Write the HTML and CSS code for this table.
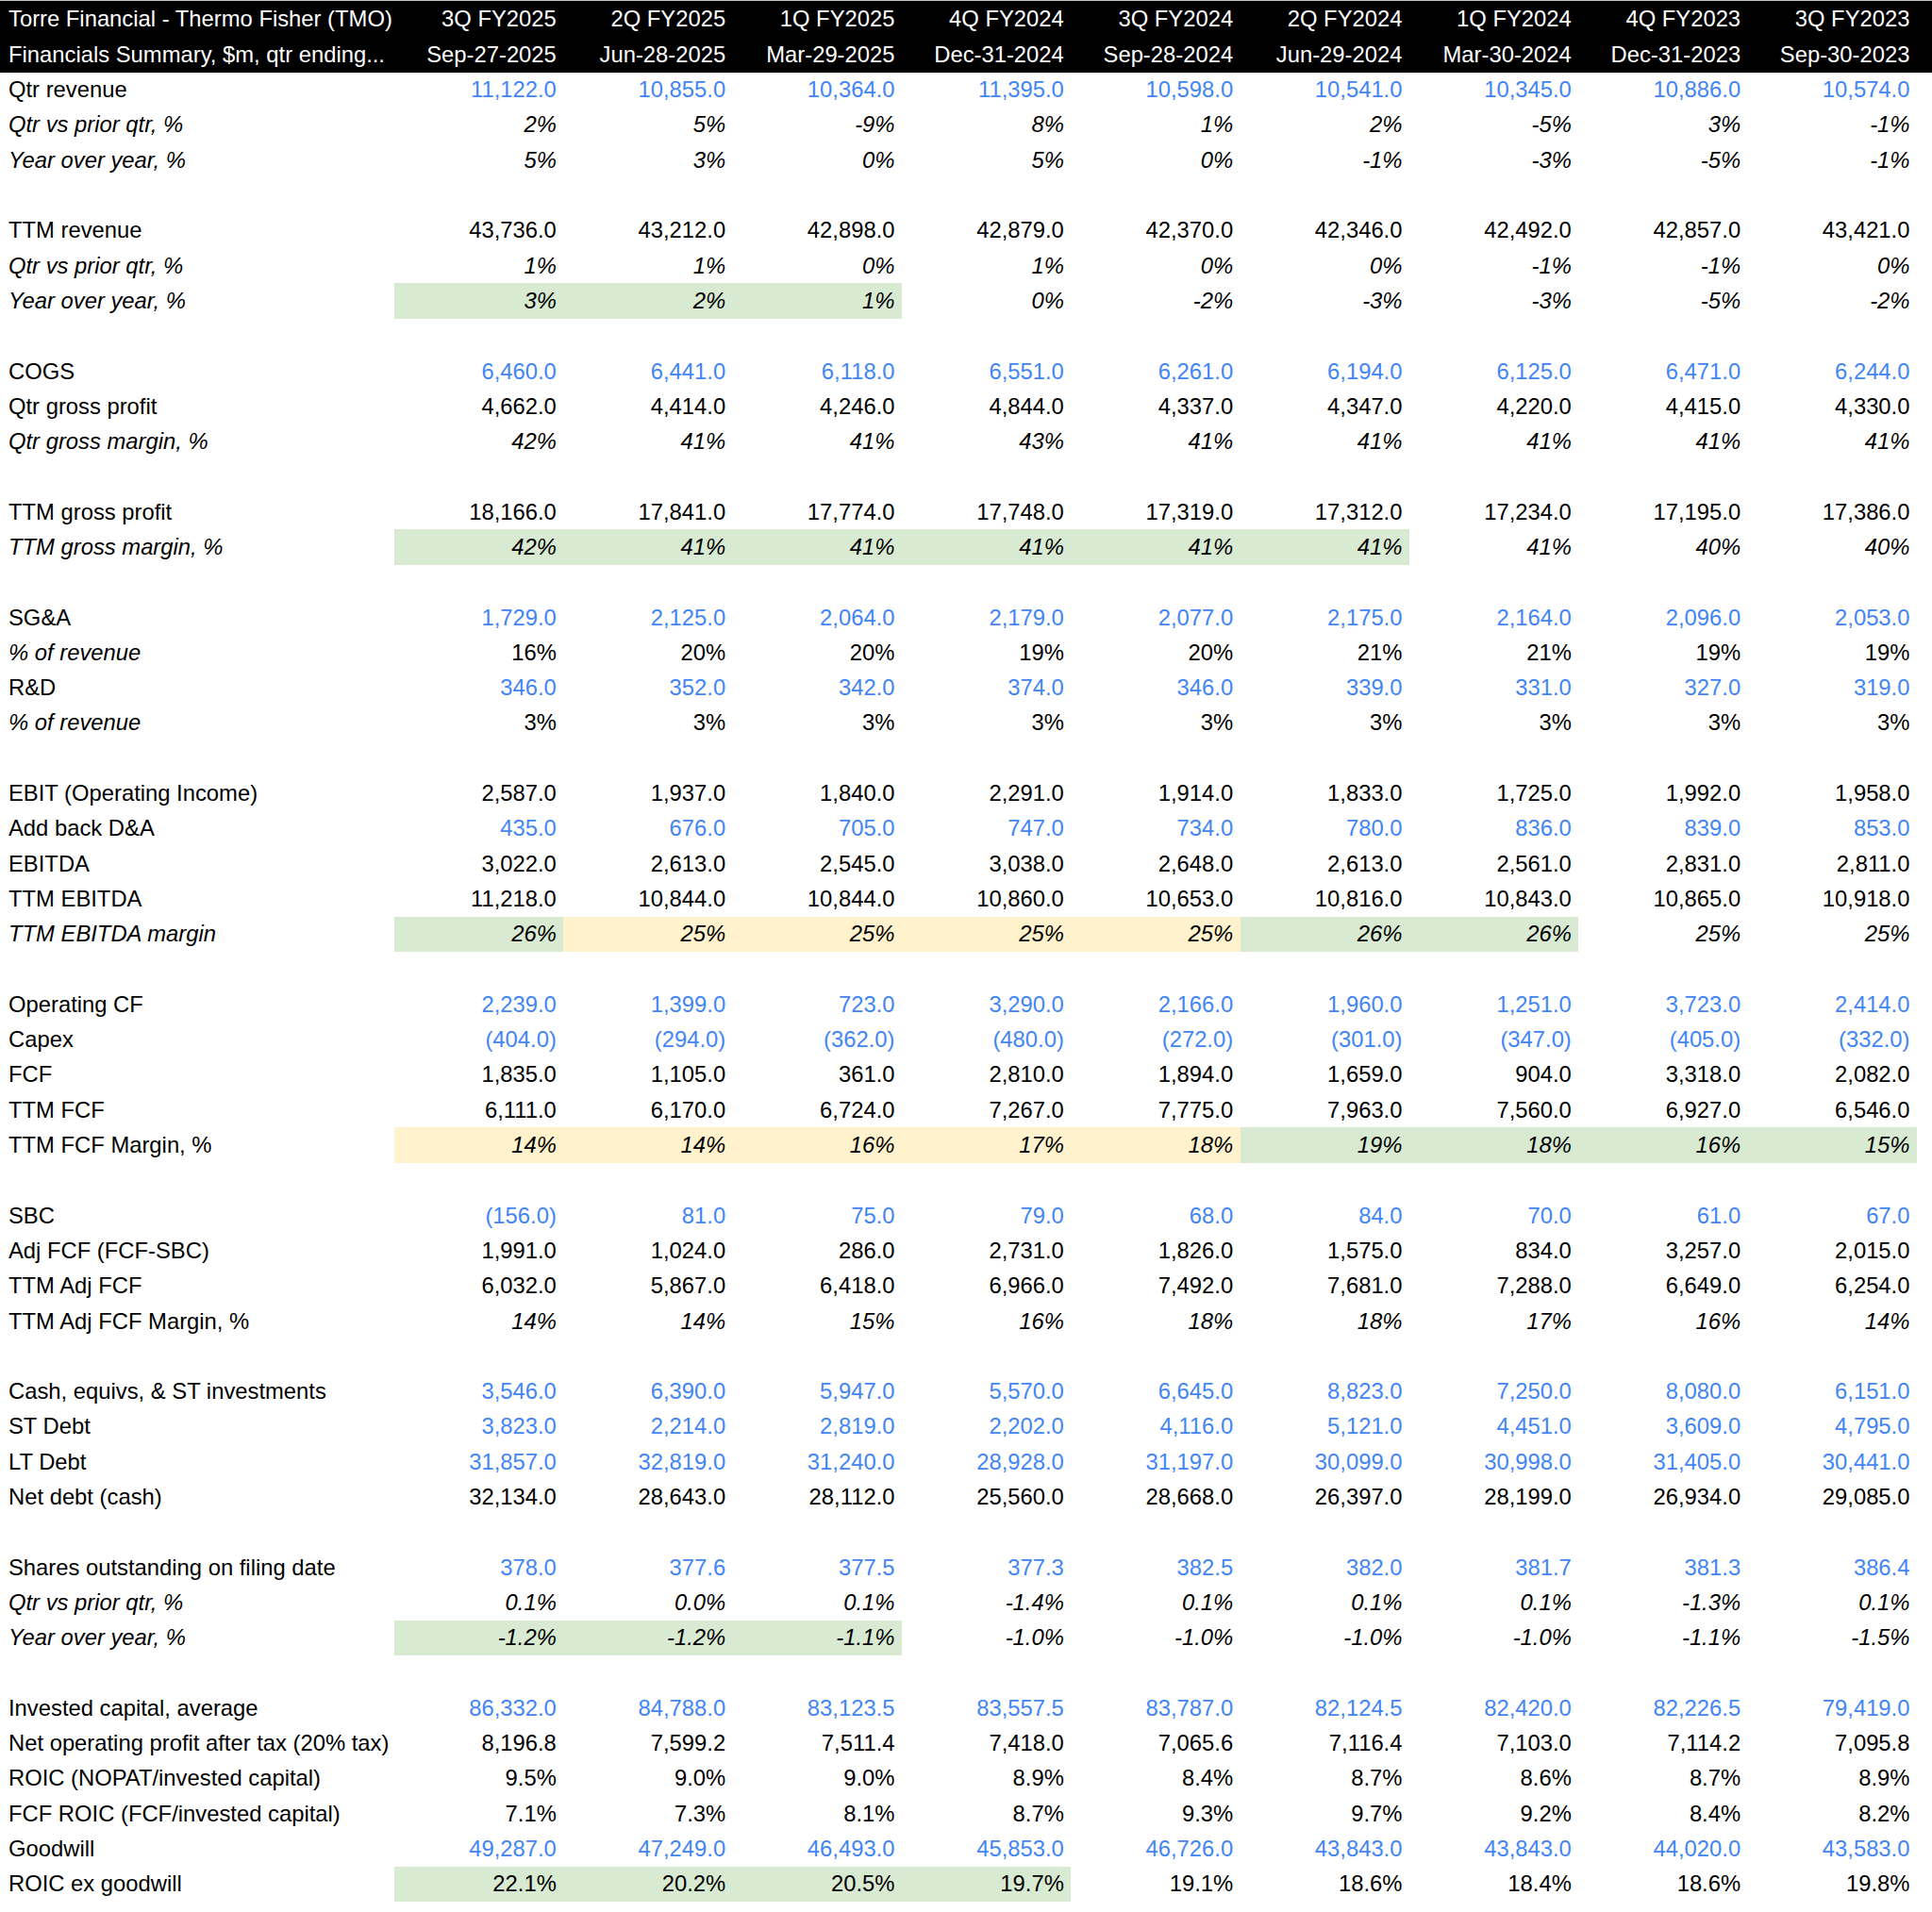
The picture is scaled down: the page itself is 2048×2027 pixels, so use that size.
FILE: index.html
```html
<!DOCTYPE html>
<html>
<head>
<meta charset="utf-8">
<link rel="stylesheet" href="styles.css">
</head>
<body>
<div class="sheet">
  <div class="head">
    <div class="row hr">
      <div class="lbl">Torre Financial - Thermo Fisher (TMO)</div>
      <div class="v">3Q FY2025</div><div class="v">2Q FY2025</div><div class="v">1Q FY2025</div><div class="v">4Q FY2024</div><div class="v">3Q FY2024</div><div class="v">2Q FY2024</div><div class="v">1Q FY2024</div><div class="v">4Q FY2023</div><div class="v">3Q FY2023</div>
    </div>
    <div class="row hr">
      <div class="lbl">Financials Summary, $m, qtr ending...</div>
      <div class="v">Sep-27-2025</div><div class="v">Jun-28-2025</div><div class="v">Mar-29-2025</div><div class="v">Dec-31-2024</div><div class="v">Sep-28-2024</div><div class="v">Jun-29-2024</div><div class="v">Mar-30-2024</div><div class="v">Dec-31-2023</div><div class="v">Sep-30-2023</div>
    </div>
  </div>

  <div class="row blue"><div class="lbl">Qtr revenue</div><div class="v">11,122.0</div><div class="v">10,855.0</div><div class="v">10,364.0</div><div class="v">11,395.0</div><div class="v">10,598.0</div><div class="v">10,541.0</div><div class="v">10,345.0</div><div class="v">10,886.0</div><div class="v">10,574.0</div></div>
  <div class="row it"><div class="lbl">Qtr vs prior qtr, %</div><div class="v">2%</div><div class="v">5%</div><div class="v">-9%</div><div class="v">8%</div><div class="v">1%</div><div class="v">2%</div><div class="v">-5%</div><div class="v">3%</div><div class="v">-1%</div></div>
  <div class="row it"><div class="lbl">Year over year, %</div><div class="v">5%</div><div class="v">3%</div><div class="v">0%</div><div class="v">5%</div><div class="v">0%</div><div class="v">-1%</div><div class="v">-3%</div><div class="v">-5%</div><div class="v">-1%</div></div>
  <div class="row"></div>

  <div class="row"><div class="lbl">TTM revenue</div><div class="v">43,736.0</div><div class="v">43,212.0</div><div class="v">42,898.0</div><div class="v">42,879.0</div><div class="v">42,370.0</div><div class="v">42,346.0</div><div class="v">42,492.0</div><div class="v">42,857.0</div><div class="v">43,421.0</div></div>
  <div class="row it"><div class="lbl">Qtr vs prior qtr, %</div><div class="v">1%</div><div class="v">1%</div><div class="v">0%</div><div class="v">1%</div><div class="v">0%</div><div class="v">0%</div><div class="v">-1%</div><div class="v">-1%</div><div class="v">0%</div></div>
  <div class="row it"><div class="lbl">Year over year, %</div><div class="v g">3%</div><div class="v g">2%</div><div class="v g">1%</div><div class="v">0%</div><div class="v">-2%</div><div class="v">-3%</div><div class="v">-3%</div><div class="v">-5%</div><div class="v">-2%</div></div>
  <div class="row"></div>

  <div class="row blue"><div class="lbl">COGS</div><div class="v">6,460.0</div><div class="v">6,441.0</div><div class="v">6,118.0</div><div class="v">6,551.0</div><div class="v">6,261.0</div><div class="v">6,194.0</div><div class="v">6,125.0</div><div class="v">6,471.0</div><div class="v">6,244.0</div></div>
  <div class="row"><div class="lbl">Qtr gross profit</div><div class="v">4,662.0</div><div class="v">4,414.0</div><div class="v">4,246.0</div><div class="v">4,844.0</div><div class="v">4,337.0</div><div class="v">4,347.0</div><div class="v">4,220.0</div><div class="v">4,415.0</div><div class="v">4,330.0</div></div>
  <div class="row it"><div class="lbl">Qtr gross margin, %</div><div class="v">42%</div><div class="v">41%</div><div class="v">41%</div><div class="v">43%</div><div class="v">41%</div><div class="v">41%</div><div class="v">41%</div><div class="v">41%</div><div class="v">41%</div></div>
  <div class="row"></div>

  <div class="row"><div class="lbl">TTM gross profit</div><div class="v">18,166.0</div><div class="v">17,841.0</div><div class="v">17,774.0</div><div class="v">17,748.0</div><div class="v">17,319.0</div><div class="v">17,312.0</div><div class="v">17,234.0</div><div class="v">17,195.0</div><div class="v">17,386.0</div></div>
  <div class="row it"><div class="lbl">TTM gross margin, %</div><div class="v g">42%</div><div class="v g">41%</div><div class="v g">41%</div><div class="v g">41%</div><div class="v g">41%</div><div class="v g">41%</div><div class="v">41%</div><div class="v">40%</div><div class="v">40%</div></div>
  <div class="row"></div>

  <div class="row blue"><div class="lbl">SG&amp;A</div><div class="v">1,729.0</div><div class="v">2,125.0</div><div class="v">2,064.0</div><div class="v">2,179.0</div><div class="v">2,077.0</div><div class="v">2,175.0</div><div class="v">2,164.0</div><div class="v">2,096.0</div><div class="v">2,053.0</div></div>
  <div class="row"><div class="lbl ilbl">% of revenue</div><div class="v">16%</div><div class="v">20%</div><div class="v">20%</div><div class="v">19%</div><div class="v">20%</div><div class="v">21%</div><div class="v">21%</div><div class="v">19%</div><div class="v">19%</div></div>
  <div class="row blue"><div class="lbl">R&amp;D</div><div class="v">346.0</div><div class="v">352.0</div><div class="v">342.0</div><div class="v">374.0</div><div class="v">346.0</div><div class="v">339.0</div><div class="v">331.0</div><div class="v">327.0</div><div class="v">319.0</div></div>
  <div class="row"><div class="lbl ilbl">% of revenue</div><div class="v">3%</div><div class="v">3%</div><div class="v">3%</div><div class="v">3%</div><div class="v">3%</div><div class="v">3%</div><div class="v">3%</div><div class="v">3%</div><div class="v">3%</div></div>
  <div class="row"></div>

  <div class="row"><div class="lbl">EBIT (Operating Income)</div><div class="v">2,587.0</div><div class="v">1,937.0</div><div class="v">1,840.0</div><div class="v">2,291.0</div><div class="v">1,914.0</div><div class="v">1,833.0</div><div class="v">1,725.0</div><div class="v">1,992.0</div><div class="v">1,958.0</div></div>
  <div class="row blue"><div class="lbl">Add back D&amp;A</div><div class="v">435.0</div><div class="v">676.0</div><div class="v">705.0</div><div class="v">747.0</div><div class="v">734.0</div><div class="v">780.0</div><div class="v">836.0</div><div class="v">839.0</div><div class="v">853.0</div></div>
  <div class="row"><div class="lbl">EBITDA</div><div class="v">3,022.0</div><div class="v">2,613.0</div><div class="v">2,545.0</div><div class="v">3,038.0</div><div class="v">2,648.0</div><div class="v">2,613.0</div><div class="v">2,561.0</div><div class="v">2,831.0</div><div class="v">2,811.0</div></div>
  <div class="row"><div class="lbl">TTM EBITDA</div><div class="v">11,218.0</div><div class="v">10,844.0</div><div class="v">10,844.0</div><div class="v">10,860.0</div><div class="v">10,653.0</div><div class="v">10,816.0</div><div class="v">10,843.0</div><div class="v">10,865.0</div><div class="v">10,918.0</div></div>
  <div class="row it"><div class="lbl">TTM EBITDA margin</div><div class="v g">26%</div><div class="v y">25%</div><div class="v y">25%</div><div class="v y">25%</div><div class="v y">25%</div><div class="v g">26%</div><div class="v g">26%</div><div class="v">25%</div><div class="v">25%</div></div>
  <div class="row"></div>

  <div class="row blue"><div class="lbl">Operating CF</div><div class="v">2,239.0</div><div class="v">1,399.0</div><div class="v">723.0</div><div class="v">3,290.0</div><div class="v">2,166.0</div><div class="v">1,960.0</div><div class="v">1,251.0</div><div class="v">3,723.0</div><div class="v">2,414.0</div></div>
  <div class="row blue"><div class="lbl">Capex</div><div class="v">(404.0)</div><div class="v">(294.0)</div><div class="v">(362.0)</div><div class="v">(480.0)</div><div class="v">(272.0)</div><div class="v">(301.0)</div><div class="v">(347.0)</div><div class="v">(405.0)</div><div class="v">(332.0)</div></div>
  <div class="row"><div class="lbl">FCF</div><div class="v">1,835.0</div><div class="v">1,105.0</div><div class="v">361.0</div><div class="v">2,810.0</div><div class="v">1,894.0</div><div class="v">1,659.0</div><div class="v">904.0</div><div class="v">3,318.0</div><div class="v">2,082.0</div></div>
  <div class="row"><div class="lbl">TTM FCF</div><div class="v">6,111.0</div><div class="v">6,170.0</div><div class="v">6,724.0</div><div class="v">7,267.0</div><div class="v">7,775.0</div><div class="v">7,963.0</div><div class="v">7,560.0</div><div class="v">6,927.0</div><div class="v">6,546.0</div></div>
  <div class="row ival"><div class="lbl">TTM FCF Margin, %</div><div class="v y">14%</div><div class="v y">14%</div><div class="v y">16%</div><div class="v y">17%</div><div class="v y">18%</div><div class="v g">19%</div><div class="v g">18%</div><div class="v g">16%</div><div class="v g">15%</div></div>
  <div class="row"></div>

  <div class="row blue"><div class="lbl">SBC</div><div class="v">(156.0)</div><div class="v">81.0</div><div class="v">75.0</div><div class="v">79.0</div><div class="v">68.0</div><div class="v">84.0</div><div class="v">70.0</div><div class="v">61.0</div><div class="v">67.0</div></div>
  <div class="row"><div class="lbl">Adj FCF (FCF-SBC)</div><div class="v">1,991.0</div><div class="v">1,024.0</div><div class="v">286.0</div><div class="v">2,731.0</div><div class="v">1,826.0</div><div class="v">1,575.0</div><div class="v">834.0</div><div class="v">3,257.0</div><div class="v">2,015.0</div></div>
  <div class="row"><div class="lbl">TTM Adj FCF</div><div class="v">6,032.0</div><div class="v">5,867.0</div><div class="v">6,418.0</div><div class="v">6,966.0</div><div class="v">7,492.0</div><div class="v">7,681.0</div><div class="v">7,288.0</div><div class="v">6,649.0</div><div class="v">6,254.0</div></div>
  <div class="row ival"><div class="lbl">TTM Adj FCF Margin, %</div><div class="v">14%</div><div class="v">14%</div><div class="v">15%</div><div class="v">16%</div><div class="v">18%</div><div class="v">18%</div><div class="v">17%</div><div class="v">16%</div><div class="v">14%</div></div>
  <div class="row"></div>

  <div class="row blue"><div class="lbl">Cash, equivs, &amp; ST investments</div><div class="v">3,546.0</div><div class="v">6,390.0</div><div class="v">5,947.0</div><div class="v">5,570.0</div><div class="v">6,645.0</div><div class="v">8,823.0</div><div class="v">7,250.0</div><div class="v">8,080.0</div><div class="v">6,151.0</div></div>
  <div class="row blue"><div class="lbl">ST Debt</div><div class="v">3,823.0</div><div class="v">2,214.0</div><div class="v">2,819.0</div><div class="v">2,202.0</div><div class="v">4,116.0</div><div class="v">5,121.0</div><div class="v">4,451.0</div><div class="v">3,609.0</div><div class="v">4,795.0</div></div>
  <div class="row blue"><div class="lbl">LT Debt</div><div class="v">31,857.0</div><div class="v">32,819.0</div><div class="v">31,240.0</div><div class="v">28,928.0</div><div class="v">31,197.0</div><div class="v">30,099.0</div><div class="v">30,998.0</div><div class="v">31,405.0</div><div class="v">30,441.0</div></div>
  <div class="row"><div class="lbl">Net debt (cash)</div><div class="v">32,134.0</div><div class="v">28,643.0</div><div class="v">28,112.0</div><div class="v">25,560.0</div><div class="v">28,668.0</div><div class="v">26,397.0</div><div class="v">28,199.0</div><div class="v">26,934.0</div><div class="v">29,085.0</div></div>
  <div class="row"></div>

  <div class="row blue"><div class="lbl">Shares outstanding on filing date</div><div class="v">378.0</div><div class="v">377.6</div><div class="v">377.5</div><div class="v">377.3</div><div class="v">382.5</div><div class="v">382.0</div><div class="v">381.7</div><div class="v">381.3</div><div class="v">386.4</div></div>
  <div class="row it"><div class="lbl">Qtr vs prior qtr, %</div><div class="v">0.1%</div><div class="v">0.0%</div><div class="v">0.1%</div><div class="v">-1.4%</div><div class="v">0.1%</div><div class="v">0.1%</div><div class="v">0.1%</div><div class="v">-1.3%</div><div class="v">0.1%</div></div>
  <div class="row it"><div class="lbl">Year over year, %</div><div class="v g">-1.2%</div><div class="v g">-1.2%</div><div class="v g">-1.1%</div><div class="v">-1.0%</div><div class="v">-1.0%</div><div class="v">-1.0%</div><div class="v">-1.0%</div><div class="v">-1.1%</div><div class="v">-1.5%</div></div>
  <div class="row"></div>

  <div class="row blue"><div class="lbl">Invested capital, average</div><div class="v">86,332.0</div><div class="v">84,788.0</div><div class="v">83,123.5</div><div class="v">83,557.5</div><div class="v">83,787.0</div><div class="v">82,124.5</div><div class="v">82,420.0</div><div class="v">82,226.5</div><div class="v">79,419.0</div></div>
  <div class="row"><div class="lbl">Net operating profit after tax (20% tax)</div><div class="v">8,196.8</div><div class="v">7,599.2</div><div class="v">7,511.4</div><div class="v">7,418.0</div><div class="v">7,065.6</div><div class="v">7,116.4</div><div class="v">7,103.0</div><div class="v">7,114.2</div><div class="v">7,095.8</div></div>
  <div class="row"><div class="lbl">ROIC (NOPAT/invested capital)</div><div class="v">9.5%</div><div class="v">9.0%</div><div class="v">9.0%</div><div class="v">8.9%</div><div class="v">8.4%</div><div class="v">8.7%</div><div class="v">8.6%</div><div class="v">8.7%</div><div class="v">8.9%</div></div>
  <div class="row"><div class="lbl">FCF ROIC (FCF/invested capital)</div><div class="v">7.1%</div><div class="v">7.3%</div><div class="v">8.1%</div><div class="v">8.7%</div><div class="v">9.3%</div><div class="v">9.7%</div><div class="v">9.2%</div><div class="v">8.4%</div><div class="v">8.2%</div></div>
  <div class="row blue"><div class="lbl">Goodwill</div><div class="v">49,287.0</div><div class="v">47,249.0</div><div class="v">46,493.0</div><div class="v">45,853.0</div><div class="v">46,726.0</div><div class="v">43,843.0</div><div class="v">43,843.0</div><div class="v">44,020.0</div><div class="v">43,583.0</div></div>
  <div class="row"><div class="lbl">ROIC ex goodwill</div><div class="v g">22.1%</div><div class="v g">20.2%</div><div class="v g">20.5%</div><div class="v g">19.7%</div><div class="v">19.1%</div><div class="v">18.6%</div><div class="v">18.4%</div><div class="v">18.6%</div><div class="v">19.8%</div></div>
</div>
</body>
</html>
```
FILE: styles.css
```css
html, body {
  margin: 0;
  padding: 0;
  background: #ffffff;
}

body {
  font-family: "Liberation Sans", Arial, Helvetica, sans-serif;
  font-size: 23.8px;
  color: #000000;
}

.sheet {
  width: 2048px;
  border-top: 1px solid #c4c4c4;
}

.head {
  background: #000000;
  color: #ffffff;
  width: 2048px;
}

.row {
  display: grid;
  grid-template-columns: 418px repeat(9, 179.33px);
  height: 37.3px;
  align-items: stretch;
}

.hr {
  height: 37.75px;
}

.lbl {
  padding-left: 9px;
  white-space: nowrap;
  display: flex;
  align-items: center;
}

.v {
  padding-right: 7.5px;
  text-align: right;
  white-space: nowrap;
  display: flex;
  align-items: center;
  justify-content: flex-end;
}

.blue .v {
  color: #4285f4;
}

.it .lbl,
.it .v,
.ilbl,
.ival .v {
  font-style: italic;
}

.g {
  background: #d9ead3;
}

.y {
  background: #fff2cc;
}
```
